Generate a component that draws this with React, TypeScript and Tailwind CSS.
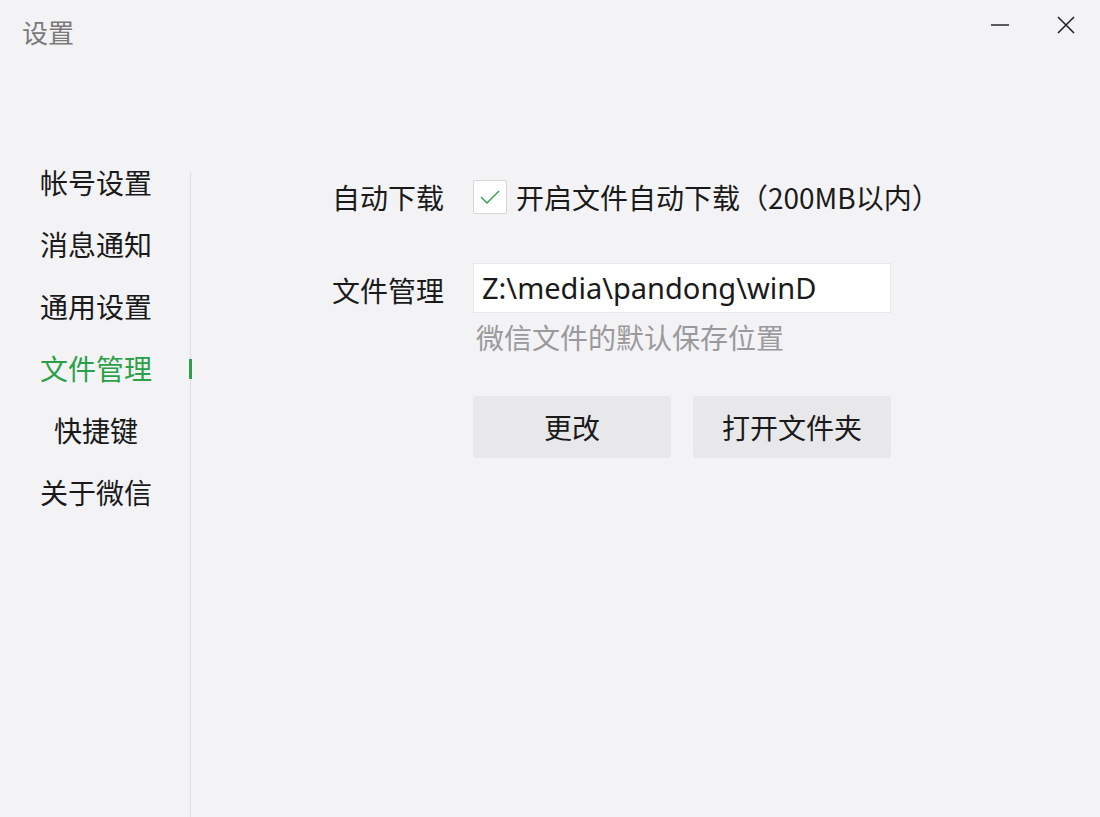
import React, { useState } from 'react';

const FONT = '"Noto Sans CJK SC", "Noto Sans", sans-serif';

const menu = ['帐号设置', '消息通知', '通用设置', '文件管理', '快捷键', '关于微信'];

export default function App() {
  const [active, setActive] = useState('文件管理');
  const [autoDownload, setAutoDownload] = useState(true);

  return (
    <div
      className="w-[1100px] h-[817px] bg-[#f3f3f5] text-[#1a1a1a] flex flex-col overflow-hidden"
      style={{ fontFamily: FONT }}
    >
      {/* title bar */}
      <header className="h-[153px] flex items-start justify-between">
        <h1 className="ml-[22px] mt-[14px] text-[26px] leading-[36px] text-[#7a7a7a]">设置</h1>
        <div className="flex items-center mr-[24px] mt-[14px] gap-[46px]">
          <button className="w-[20px] h-[22px] flex items-center justify-center">
            <svg width="20" height="20" viewBox="0 0 20 20">
              <path d="M1 10h18" stroke="#333" strokeWidth="1.6" />
            </svg>
          </button>
          <button className="w-[20px] h-[22px] flex items-center justify-center">
            <svg width="20" height="20" viewBox="0 0 20 20">
              <path d="M2 2l16 16M18 2L2 18" stroke="#222" strokeWidth="1.6" />
            </svg>
          </button>
        </div>
      </header>

      <div className="flex flex-1">
        {/* side menu */}
        <nav className="w-[190px] relative -mt-[2px]">
          {menu.map((item) => (
            <div
              key={item}
              onClick={() => setActive(item)}
              className="relative h-[62px] flex items-center cursor-pointer"
            >
              <span
                className={`ml-[40px] w-[112px] text-center text-[28px] leading-[36px] ${
                  active === item ? 'text-[#2aa148]' : 'text-[#1a1a1a]'
                }`}
              >
                {item}
              </span>
              {active === item && (
                <span className="absolute right-[-2px] top-[22px] w-[3px] h-[20px] bg-[#2aa148] z-10" />
              )}
            </div>
          ))}
        </nav>
        <div className="w-px bg-[#dedede] mt-[19px]" />

        {/* file settings */}
        <main className="flex-1 pt-[27px] pl-[141px]">
          <div className="flex items-center h-[34px]">
            <span className="w-[112px] mr-[29px] text-[28px] leading-[36px]">自动下载</span>
            <button
              onClick={() => setAutoDownload(!autoDownload)}
              className="w-[34px] h-[34px] bg-white border border-[#d6d6d8] rounded-[2px] flex items-center justify-center"
            >
              {autoDownload && (
                <svg width="22" height="18" viewBox="0 0 22 18">
                  <path d="M2 9l6 6L20 3" fill="none" stroke="#2aa148" strokeWidth="1.4" />
                </svg>
              )}
            </button>
            <span className="ml-[9px] text-[28px] leading-[36px]">开启文件自动下载（200MB以内）</span>
          </div>

          <div className="flex items-center mt-[49px]">
            <span className="w-[112px] mr-[29px] text-[28px] leading-[36px] mt-[4px]">文件管理</span>
            <div className="w-[418px] h-[50px] bg-white border border-[#e8e8ea] flex items-center pl-[8px]">
              <span className="text-[29px] leading-[36px]" style={{ fontFamily: '"Noto Sans", sans-serif' }}>
                Z:\media\pandong\winD
              </span>
            </div>
          </div>
          <p className="ml-[144px] mt-[6px] text-[28px] leading-[36px] text-[#9a9a9c]">微信文件的默认保存位置</p>

          <div className="flex gap-[22px] ml-[141px] mt-[41px]">
            <button className="w-[198px] h-[62px] rounded-[4px] bg-[#e8e8ea] text-[28px] leading-[36px]">更改</button>
            <button className="w-[198px] h-[62px] rounded-[4px] bg-[#e8e8ea] text-[28px] leading-[36px]">打开文件夹</button>
          </div>
        </main>
      </div>
    </div>
  );
}
